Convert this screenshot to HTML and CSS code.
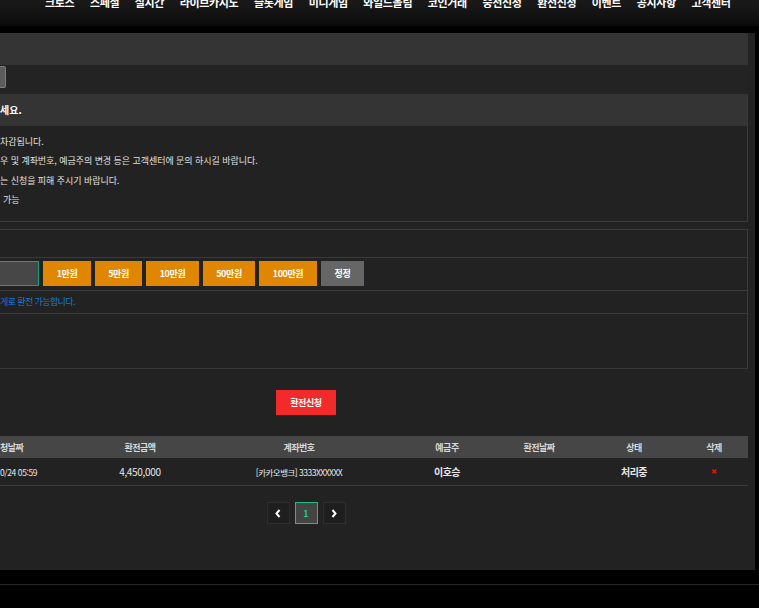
FILE: index.html
```html
<!DOCTYPE html>
<html lang="ko">
<head>
<meta charset="utf-8">
<title>환전신청</title>
<link rel="stylesheet" href="styles.css">
</head>
<body>
<header class="topnav">
  <nav class="menu">
    <a href="#">크로스</a><a href="#">스페셜</a><a href="#">실시간</a><a href="#">라이브카지노</a><a href="#">슬롯게임</a><a href="#">미니게임</a><a href="#">와일드올림</a><a href="#">코인거래</a><a href="#">충전신청</a><a href="#">환전신청</a><a href="#">이벤트</a><a href="#">공지사항</a><a href="#">고객센터</a>
  </nav>
</header>
<main class="container">
  <div class="content">
    <div class="title-bar"></div>
    <div class="tab-row"><span class="tab-btn"></span></div>
    <section class="notice">
      <h2 class="notice-head">세요.</h2>
      <ul class="notice-body">
        <li>차감됩니다.</li>
        <li>우 및 계좌번호, 예금주의 변경 등은 고객센터에 문의 하시길 바랍니다.</li>
        <li>는 신청을 피해 주시기 바랍니다.</li>
        <li class="indent">가능</li>
      </ul>
    </section>
    <section class="form-box">
      <div class="form-row row-top"></div>
      <div class="form-row row-amount">
        <input class="amount-input" type="text" value="">
        <button class="amt-btn w48">1만원</button>
        <button class="amt-btn w47">5만원</button>
        <button class="amt-btn w53">10만원</button>
        <button class="amt-btn w52">50만원</button>
        <button class="amt-btn w58">100만원</button>
        <button class="amt-btn reset">정정</button>
      </div>
      <div class="form-row row-hint">게로 환전 가능합니다.</div>
      <div class="form-row row-tall"></div>
    </section>
    <div class="submit-wrap"><button class="submit">환전신청</button></div>
    <div class="history">
      <div class="hist-head">
        <span class="c1">청날짜</span><span>환전금액</span><span>계좌번호</span><span>예금주</span><span>환전날짜</span><span>상태</span><span>삭제</span>
      </div>
      <div class="hist-row">
        <span class="c1 date">0/24 05:59</span><span class="money">4,450,000</span><span class="acct">[카카오뱅크] 3333XXXXXX</span><span class="strong">이호승</span><span></span><span class="strong">처리중</span><span class="del">✖</span>
      </div>
    </div>
    <div class="pager">
      <a class="pg" href="#"><svg width="8" height="9" viewBox="0 0 8 9"><path d="M5.5 1 L2.5 4.5 L5.5 8" fill="none" stroke="#fff" stroke-width="2"/></svg></a>
      <a class="pg active" href="#">1</a>
      <a class="pg" href="#"><svg width="8" height="9" viewBox="0 0 8 9"><path d="M2.5 1 L5.5 4.5 L2.5 8" fill="none" stroke="#fff" stroke-width="2"/></svg></a>
    </div>
  </div>
</main>
<footer class="foot"></footer>
</body>
</html>
```
FILE: styles.css
```css
* { box-sizing: border-box; margin: 0; padding: 0; }
html, body { background: #000; }
body {
  width: 759px;
  height: 608px;
  overflow: hidden;
  font-family: "Noto Sans CJK KR", "Noto Sans", sans-serif;
  color: #ddd;
}

.topnav {
  height: 26px;
  background: linear-gradient(#1a1a1a, #0b0b0b);
  overflow: hidden;
}
.menu {
  display: flex;
  gap: 15.6px;
  padding-left: 45px;
  margin-top: -4px;
}
.menu a {
  color: #fff;
  font-weight: 700;
  font-size: 11px;
  letter-spacing: -0.35px;
  line-height: 13px;
  text-decoration: none;
  white-space: nowrap;
}

.container {
  margin-top: 7px;
  width: 755px;
  height: 537px;
  background: #222;
  overflow: hidden;
}
.content {
  margin-left: -136px;
  width: 884px;
}

.title-bar { height: 32px; background: #343434; }
.tab-row {
  height: 29px;
  background: #232323;
  padding: 1px 0 0 136px;
}
.tab-btn {
  display: block;
  width: 6px;
  height: 22px;
  background: #5c5c5c;
  border: 1px solid #7c7c7c;
  border-left: none;
  border-radius: 0 2px 2px 0;
}

.notice {
  border: 1px solid #3a3a3a;
  border-top: none;
  border-left: none;
}
.notice-head {
  height: 32px;
  background: #343434;
  font-size: 10px;
  font-weight: 700;
  color: #fff;
  line-height: 32px;
  padding-left: 136px;
}
.notice-body {
  list-style: none;
  padding: 6px 0 12px 136px;
  font-size: 9px;
  line-height: 19.3px;
  letter-spacing: -0.05px;
  color: #e0e0e0;
}
.notice-body .indent { padding-left: 3px; }

.form-box {
  margin-top: 7px;
  border: 1px solid #3a3a3a;
  border-left: none;
}
.form-row { border-top: 1px solid #3a3a3a; }
.form-row.row-top { border-top: none; height: 27px; }
.row-amount {
  height: 33px;
  display: flex;
  align-items: flex-start;
  gap: 4px;
  padding-top: 3px;
}
.amount-input {
  width: 175px;
  height: 25px;
  background: #474747;
  border: 1px solid #1fa074;
  outline: none;
}
.amt-btn {
  height: 25px;
  border: none;
  background: #e08600;
  color: #fff;
  font-family: "Noto Sans CJK KR", "Noto Sans", sans-serif;
  font-size: 9px;
  font-weight: 700;
  letter-spacing: -0.4px;
}
.amt-btn.w48 { width: 48px; }
.amt-btn.w47 { width: 47px; }
.amt-btn.w53 { width: 53px; }
.amt-btn.w52 { width: 52px; }
.amt-btn.w58 { width: 58px; }
.amt-btn.reset { width: 43px; background: #666; }
.row-hint {
  height: 23px;
  line-height: 22px;
  padding-left: 136px;
  font-size: 9px;
  letter-spacing: -0.6px;
  color: #1c78d2;
}
.row-tall { height: 55px; }

.submit-wrap {
  display: flex;
  justify-content: center;
  margin-top: 21px;
}
.submit {
  width: 60px;
  height: 25px;
  border: none;
  background: #f22a2a;
  color: #fff;
  font-family: "Noto Sans CJK KR", "Noto Sans", sans-serif;
  font-size: 9px;
  font-weight: 700;
  letter-spacing: -0.4px;
}

.history { margin-top: 21px; }
.hist-head, .hist-row {
  display: grid;
  grid-template-columns: 222px 108px 210px 86px 98px 92px 68px;
  align-items: center;
  text-align: center;
}
.hist-head {
  height: 22px;
  background: #464646;
  font-size: 9px;
  font-weight: 700;
  letter-spacing: -0.5px;
  color: #d8d8d8;
}
.hist-row {
  height: 28px;
  border-bottom: 1px solid #3a3a3a;
  font-size: 9px;
  color: #e8e8e8;
}
.hist-head .c1, .hist-row .c1 {
  text-align: left;
  padding-left: 136px;
}
.hist-row .date { letter-spacing: -0.4px; font-size: 8.5px; }
.hist-row .money { font-size: 10px; letter-spacing: -0.3px; }
.hist-row .acct { font-size: 8.5px; letter-spacing: -0.5px; }
.hist-row .strong { font-size: 10px; font-weight: 700; letter-spacing: -0.5px; }
.hist-row .del { color: #e60f0f; font-size: 7px; font-family: "DejaVu Sans", sans-serif; }

.pager {
  display: flex;
  justify-content: center;
  gap: 5px;
  margin-top: 16px;
}
.pg {
  width: 23px;
  height: 22px;
  display: flex;
  align-items: center;
  justify-content: center;
  background: #1e1e1e;
  border: 1px solid #2e2e2e;
  color: #fff;
  text-decoration: none;
}
.pg.active {
  background: #444;
  border-color: #1fbf80;
  color: #23c886;
  font-size: 9px;
  font-weight: 700;
}

.foot {
  margin-top: 14px;
  height: 1px;
  background: #262626;
}
```
